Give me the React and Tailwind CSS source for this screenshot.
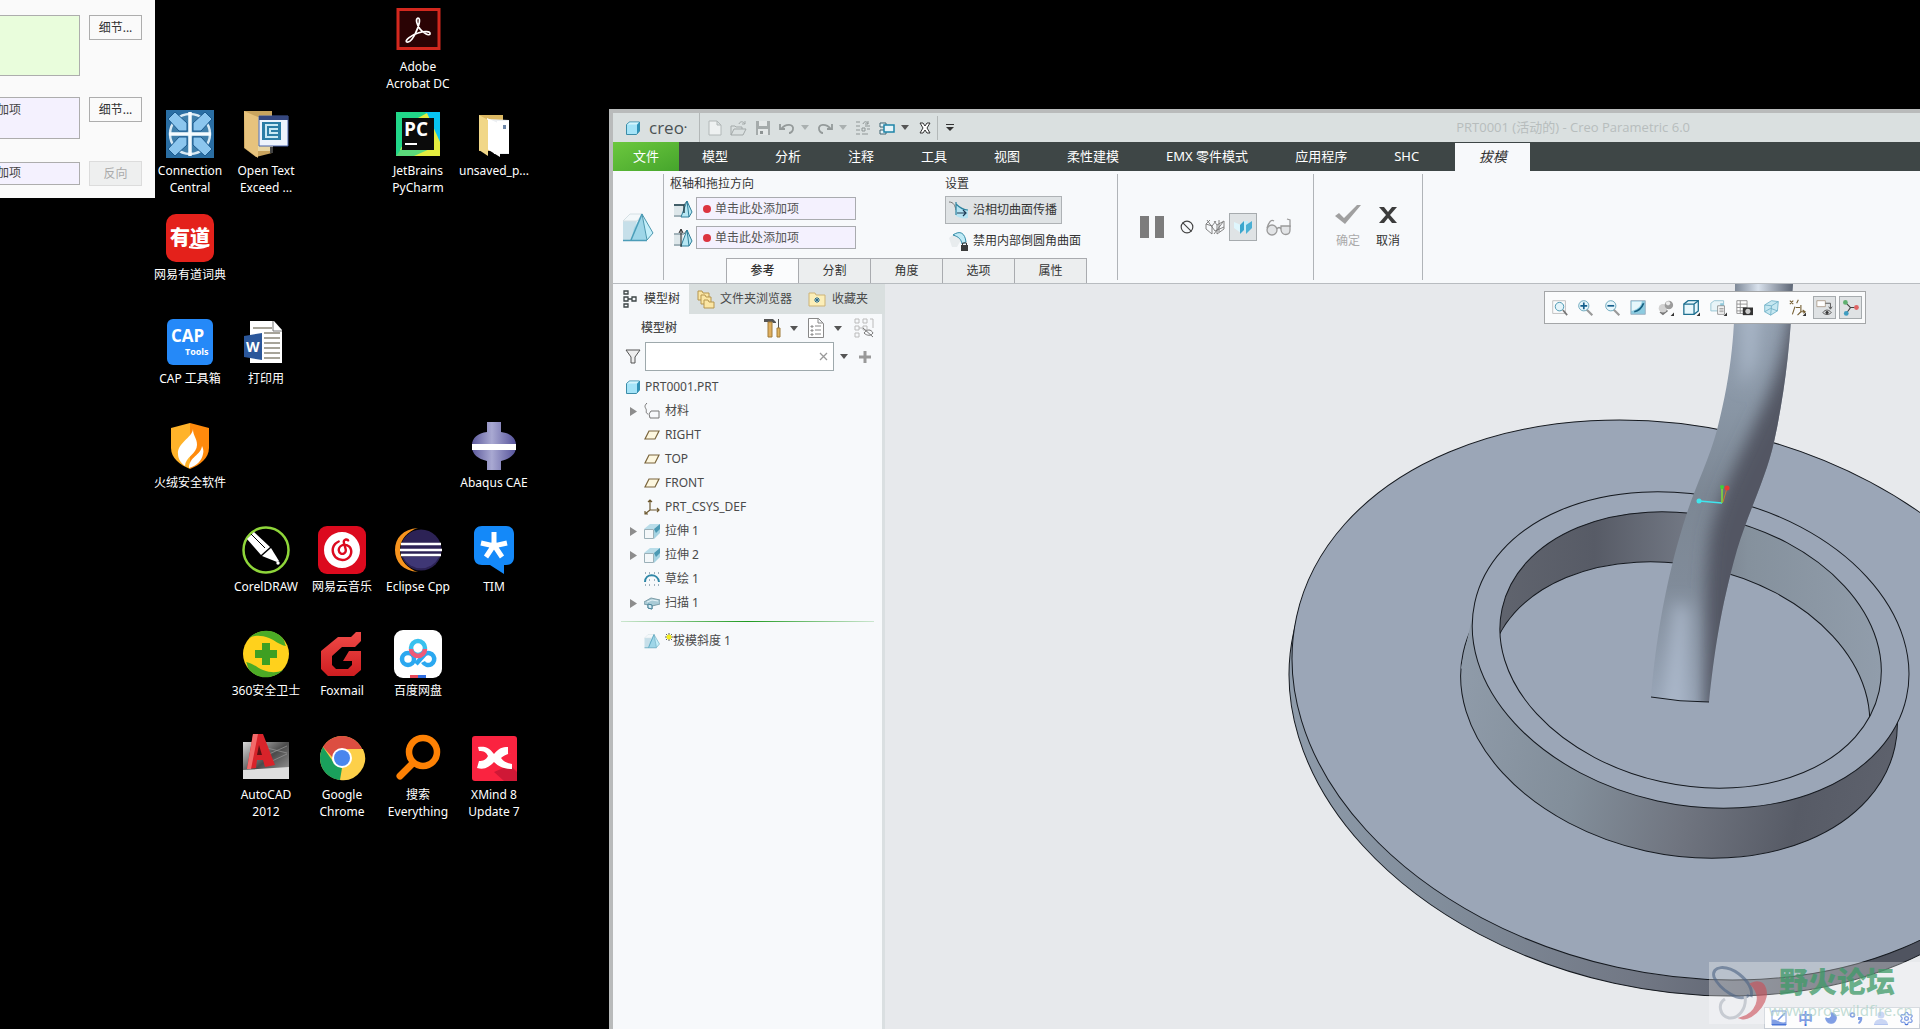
import React, { useState } from 'react';
import { SiNeteasecloudmusic } from 'react-icons/si';
import { Ban, Moon, Settings } from 'lucide-react';

/* ---------- desktop icons, all on a 48 x 48 grid ---------- */

const AcrobatIcon = () => (
  <svg viewBox="0 0 48 48" className="w-12 h-12">
    <rect x="4" y="3.500" width="41" height="39" fill="#2a0304" stroke="#d3281e" strokeWidth="3" />
    <path
      d="M13 36c-3-1 4-7 11-9 6-2 13-2 12 1-1 2-7-1-10-5-3-4-5-10-2-11 3 0 1 8-2 14-2 5-6 11-9 10z"
      fill="none" stroke="#fff" strokeWidth="1.700"
    />
  </svg>
);

const ConnectionIcon = () => (
  <svg viewBox="0 0 48 48" className="w-12 h-12">
    <rect width="48" height="48" fill="#2a6ea3" />
    <circle cx="24" cy="24" r="20" fill="#3f7fab" stroke="#d7e9f4" strokeWidth="2.500" />
    <g fill="#8cc6ee" stroke="#1b598d" strokeWidth="1">
      <path d="M2 9l7-7 12 11v8h-8z" />
      <path d="M46 9l-7-7-12 11v8h8z" />
      <path d="M2 39l7 7 12-11v-8h-8z" />
      <path d="M46 39l-7 7-12-11v-8h8z" />
    </g>
    <path d="M24 2v44M3 24h42" stroke="#f5fbff" strokeWidth="3.500" />
  </svg>
);

const ExceedIcon = () => (
  <svg viewBox="0 0 48 48" className="w-12 h-12">
    <path d="M2 1h28v42l-16 4L2 38z" fill="#c9a45e" />
    <path d="M15 7h16v34H15z" fill="#e8d6a3" />
    <path d="M17 6h29v30H17z" fill="#eef4fd" stroke="#4862a8" />
    <path d="M17 6h29v4H17z" fill="#35477f" />
    <path d="M20 12h19v18H20z" fill="#2b7da6" />
    <path d="M36 15H24v12h12M36 19h-8v4h8" fill="none" stroke="#c8e8f4" strokeWidth="2" />
    <path d="M2 1l14 6v41L3 38z" fill="#e7c37d" />
    <path d="M28 37h3v6h-3z" fill="#444" />
  </svg>
);

const PyCharmIcon = () => (
  <svg viewBox="0 0 48 48" className="w-12 h-12">
    <path d="M2 2h44v44H2z" fill="#21d789" />
    <path d="M31 2h15v30L34 12z" fill="#07c3f2" />
    <path d="M24 8l9-5 13 29v14H14l-8-6z" fill="#e3ec3f" />
    <path d="M2 46l6-8h30l-18 8z" fill="#5bd97a" />
    <path d="M8 8h32v32H8z" fill="#0b0b0b" />
    <text x="10" y="26" fontSize="19" fontWeight="700" fill="#fff" fontFamily="Open Sans, sans-serif">PC</text>
    <path d="M11 33h12v2H11z" fill="#fff" />
  </svg>
);

const FolderIcon = () => (
  <svg viewBox="0 0 48 48" className="w-12 h-12">
    <path d="M9 5h24v36H9z" fill="#dcb863" />
    <path d="M17 9l22 1v34H24z" fill="#eceff2" />
    <path d="M27 11h12v32H27z" fill="#fff" />
    <path d="M33 15h3v4h-3z" fill="#6d87a8" />
    <path d="M17 8l13 6v33l-13-8z" fill="#fff" />
    <path d="M9 5l9 5v36L9 40z" fill="#f1d788" />
  </svg>
);

const YoudaoIcon = () => (
  <svg viewBox="0 0 48 48" className="w-12 h-12">
    <rect width="48" height="48" rx="10" fill="#e4211b" />
    <text x="24" y="31" textAnchor="middle" fontSize="20" fontWeight="900" fill="#fff" fontFamily="Noto Sans CJK SC, sans-serif">有道</text>
    <path d="M23 33c8 2 15 1 20-2" fill="none" stroke="#fff" strokeWidth="2" />
  </svg>
);

const CapIcon = () => (
  <svg viewBox="0 0 48 48" className="w-12 h-12">
    <rect x="1" y="1" width="46" height="46" rx="6" fill="#2589f8" />
    <text x="5" y="24" fontSize="17" fontWeight="700" fill="#fff" fontFamily="Open Sans, sans-serif">CAP</text>
    <text x="19" y="37" fontSize="9" fontWeight="700" fill="#fff" fontFamily="Open Sans, sans-serif">Tools</text>
  </svg>
);

const WordIcon = () => (
  <svg viewBox="0 0 48 48" className="w-12 h-12">
    <path d="M8 3h24l8 9v33H8z" fill="#fff" />
    <path d="M31 3v10h9" fill="none" stroke="#777" />
    <path d="M11 10h19M22 15h16M22 20h16M22 25h16M22 30h16M22 35h16M22 40h16" stroke="#8b8778" strokeWidth="1.500" />
    <path d="M2 18l18-3v27L2 39z" fill="#2b579a" />
    <text x="4" y="34" fontSize="14" fontWeight="700" fill="#fff" fontFamily="Open Sans, sans-serif">W</text>
  </svg>
);

const HuorongIcon = () => (
  <svg viewBox="0 0 48 48" className="w-12 h-12">
    <path d="M24 1l19 5v20c0 10-9 17-19 21z" fill="#ff8a0c" />
    <path d="M24 1L5 6v20c0 10 9 17 19 21z" fill="#ffb32a" />
    <path d="M27 7c-1 9-16 14-15 25 0 5 3 9 7 12 0-9 12-12 12-21 0-7-4-9-4-16z" fill="#fff" />
    <path d="M36 24c-1 9-13 11-13 22 8-2 13-8 14-14 1-3 0-6-1-8z" fill="#fff" />
  </svg>
);

const AbaqusIcon = () => (
  <svg viewBox="0 0 48 48" className="w-12 h-12">
    <defs>
      <linearGradient id="abq" x1="0" x2="1">
        <stop offset="0" stopColor="#5d5a9c" />
        <stop offset=".45" stopColor="#a9a9d2" />
        <stop offset="1" stopColor="#55529a" />
      </linearGradient>
    </defs>
    <path d="M17 0h14v10c9 1 15 6 15 13v2c0 7-6 12-15 14v9H17v-9C8 37 2 32 2 25v-2c0-7 6-12 15-13z" fill="url(#abq)" />
    <path d="M2 22h44v6H2z" fill="#fff" />
  </svg>
);

const CorelIcon = () => (
  <svg viewBox="0 0 48 48" className="w-12 h-12">
    <circle cx="24" cy="24" r="22.500" fill="#000" stroke="#8fd63a" strokeWidth="2.500" />
    <path d="M5 13l7-7 16 15-9 8z" fill="#fff" />
    <path d="M9 8l14 14" stroke="#000" strokeWidth="1" />
    <path d="M20 30l9-8 8 13-2 1z" fill="#fff" />
    <circle cx="36" cy="37" r="1.700" fill="#fff" />
  </svg>
);

const NeteaseIcon = () => (
  <span className="flex w-12 h-12 items-center justify-center rounded-[9px] bg-[#dc0a1e]">
    <SiNeteasecloudmusic className="w-9 h-9 text-white" />
  </span>
);

const EclipseIcon = () => (
  <svg viewBox="0 0 48 48" className="w-12 h-12">
    <path d="M24 2C9 3 1 12 1 24s8 21 23 22C14 43 6 35 6 24S14 5 24 2z" fill="#f7941e" />
    <circle cx="27" cy="24" r="20.500" fill="#2c2255" />
    <path d="M9 31h36a20 20 0 0 1-36 0z" fill="#3f3775" />
    <path d="M7 18h40M6 24h42M7 29h40" stroke="#fff" strokeWidth="2.500" />
  </svg>
);

const TimIcon = () => (
  <svg viewBox="0 0 48 48" className="w-12 h-12">
    <path d="M12 0h24c5 0 8 3 8 8v23c0 5-3 8-8 8h-2v9L20 39h-8c-5 0-8-3-8-8V8c0-5 3-8 8-8z" fill="#1489f9" />
    <path d="M24 6v14M11 17l13 3 13-3M24 19l-8 12M24 19l8 12" fill="none" stroke="#fff" strokeWidth="5" />
  </svg>
);

const Safe360Icon = () => (
  <svg viewBox="0 0 48 48" className="w-12 h-12">
    <circle cx="24" cy="24" r="23" fill="#ffd11c" />
    <path d="M7 8C18-3 35-1 42 10c1 3 1 5 2 6-7-1-11-6-17-8-8-3-14-3-20 0z" fill="#4cab26" />
    <path d="M41 40C30 51 13 49 6 38c-1-3-1-5-2-6 7 1 11 6 17 8 8 3 14 3 20 0z" fill="#4cab26" />
    <path d="M20 13h8v7h7v8h-7v7h-8v-7h-7v-8h7z" fill="#3e9f22" />
  </svg>
);

const FoxmailIcon = () => (
  <svg viewBox="0 0 48 48" className="w-12 h-12">
    <defs>
      <linearGradient id="fox" x1="0" x2="0" y2="1">
        <stop offset="0" stopColor="#f04b48" />
        <stop offset="1" stopColor="#cf1d20" />
      </linearGradient>
    </defs>
    <path d="M43 2v9l-6 6H24l-10 9v9l4 4h12l4-4v-4h-9l6-10h12v19l-7 6H10l-7-7V21L20 7h13l5-5z" fill="url(#fox)" />
  </svg>
);

const BaiduDiskIcon = () => (
  <svg viewBox="0 0 48 48" className="w-12 h-12">
    <rect width="48" height="48" rx="9" fill="#fff" />
    <g fill="none" strokeWidth="4.500">
      <circle cx="14" cy="29" r="6" stroke="#2ba8f0" />
      <path d="M29 32a6 6 0 1 0 2-8l-9 10" stroke="#2ba8f0" />
      <circle cx="24" cy="18" r="7" stroke="#38c1ee" />
      <path d="M17 19a7 7 0 0 0 14 0" stroke="#ee5a78" />
    </g>
    <path d="M16 45h8v3h-8z" fill="#e94a5b" />
    <path d="M24 45h8v3h-8z" fill="#2f6de0" />
  </svg>
);

const AutoCadIcon = () => (
  <svg viewBox="0 0 48 48" className="w-12 h-12">
    <defs>
      <linearGradient id="acad" x1="0" x2="1" y2="1">
        <stop offset="0" stopColor="#d8d8d8" />
        <stop offset=".5" stopColor="#4b4b4b" />
        <stop offset="1" stopColor="#aaa" />
      </linearGradient>
    </defs>
    <path d="M1 8h46v37H1z" fill="url(#acad)" />
    <path d="M1 36l46-3v12H1z" fill="#dedede" />
    <path d="M25 14l20 5M27 20l18-8M30 27l15-7" stroke="#999" strokeWidth=".700" />
    <path d="M11 0h10l12 31-10 2-2-7h-6l-1 8-9 1z" fill="#d8232a" />
    <path d="M11 0h5L9 35H5z" fill="#f26a6a" />
    <path d="M17 11l3 10h-5z" fill="#5c1013" />
  </svg>
);

const ChromeIcon = () => (
  <svg viewBox="0 0 48 48" className="w-12 h-12">
    <circle cx="24" cy="24" r="22" fill="#fdd049" />
    <path d="M5 13a22 22 0 0 1 38 0l1 2H24l-9 9z" fill="#dc4e41" />
    <path d="M5 13l11 16 8 5-2 12A22 22 0 0 1 5 13z" fill="#1aa05c" />
    <path d="M30 32l-8 14a22 22 0 0 0 23-31H28z" fill="#fdd049" />
    <circle cx="24" cy="24" r="10" fill="#fff" />
    <circle cx="24" cy="24" r="8" fill="#4a86ee" />
  </svg>
);

const EverythingIcon = () => (
  <svg viewBox="0 0 48 48" className="w-12 h-12">
    <circle cx="29" cy="18" r="14" fill="none" stroke="#fd8104" strokeWidth="6.500" />
    <path d="M19 29L6 42" stroke="#fd8104" strokeWidth="7" strokeLinecap="round" />
  </svg>
);

const XMindIcon = () => (
  <svg viewBox="0 0 48 48" className="w-12 h-12">
    <rect x="2" y="2" width="45" height="45" rx="3" fill="#fa2340" />
    <path d="M40 31l7 7v9H34l-10-9z" fill="#cf1836" />
    <path d="M8 13c6-1 11 0 16 7 5-6 8-7 14-7v7l4-1c-5 1-8 2-11 5 3 4 6 5 11 6v5c-8 0-13-2-18-7-5 5-9 8-17 6l2-7c4 0 7-1 9-5-2-4-4-5-9-5z" fill="#fff" />
  </svg>
);

// row / column slots of the desktop grid
const shortcuts = [
  { Icon: AcrobatIcon, label: 'Adobe Acrobat DC', place: 'col-start-4 row-start-1' },
  { Icon: ConnectionIcon, label: 'Connection Central', place: 'col-start-1 row-start-2' },
  { Icon: ExceedIcon, label: 'Open Text Exceed ...', place: 'col-start-2 row-start-2' },
  { Icon: PyCharmIcon, label: 'JetBrains PyCharm', place: 'col-start-4 row-start-2' },
  { Icon: FolderIcon, label: 'unsaved_p...', place: 'col-start-5 row-start-2' },
  { Icon: YoudaoIcon, label: '网易有道词典', place: 'col-start-1 row-start-3' },
  { Icon: CapIcon, label: 'CAP 工具箱', place: 'col-start-1 row-start-4' },
  { Icon: WordIcon, label: '打印用', place: 'col-start-2 row-start-4' },
  { Icon: HuorongIcon, label: '火绒安全软件', place: 'col-start-1 row-start-5' },
  { Icon: AbaqusIcon, label: 'Abaqus CAE', place: 'col-start-5 row-start-5' },
  { Icon: CorelIcon, label: 'CorelDRAW', place: 'col-start-2 row-start-6' },
  { Icon: NeteaseIcon, label: '网易云音乐', place: 'col-start-3 row-start-6' },
  { Icon: EclipseIcon, label: 'Eclipse Cpp', place: 'col-start-4 row-start-6' },
  { Icon: TimIcon, label: 'TIM', place: 'col-start-5 row-start-6' },
  { Icon: Safe360Icon, label: '360安全卫士', place: 'col-start-2 row-start-7' },
  { Icon: FoxmailIcon, label: 'Foxmail', place: 'col-start-3 row-start-7' },
  { Icon: BaiduDiskIcon, label: '百度网盘', place: 'col-start-4 row-start-7' },
  { Icon: AutoCadIcon, label: 'AutoCAD 2012', place: 'col-start-2 row-start-8' },
  { Icon: ChromeIcon, label: 'Google Chrome', place: 'col-start-3 row-start-8' },
  { Icon: EverythingIcon, label: '搜索 Everything', place: 'col-start-4 row-start-8' },
  { Icon: XMindIcon, label: 'XMind 8 Update 7', place: 'col-start-5 row-start-8' },
];

function Desktop() {
  return (
    <div className="absolute left-[152px] top-[6px] grid grid-cols-[repeat(5,76px)] grid-rows-[repeat(8,104px)]">
      {shortcuts.map(({ Icon, label, place }) => (
        <button key={label} className={`flex flex-col items-center gap-1 text-xs leading-[17px] text-white ${place}`}>
          <Icon />
          <span className="text-center">{label}</span>
        </button>
      ))}
    </div>
  );
}

/* ---------- dialog cut off by the left edge ---------- */

function ReferencePanel() {
  const detail = 'h-[25px] w-[53px] border border-[#adadad] bg-[#fafafa] text-xs text-[#333]';
  return (
    <section className="absolute -left-1 top-0 flex h-[198px] w-[159px] flex-col bg-[#fafafa] pt-[15px] text-xs text-[#444]">
      <div className="flex h-[82px] items-start gap-[9px]">
        <div className="h-[61px] w-[84px] border border-[#adadad] bg-[#e9fddc]" />
        <button className={detail}>细节...</button>
      </div>
      <div className="flex h-[64px] items-start gap-[9px]">
        <div className="h-[42px] w-[84px] border border-[#adadad] bg-[#f4f1fe] pt-1 leading-4">加项</div>
        <button className={detail}>细节...</button>
      </div>
      <div className="flex items-center gap-[9px]">
        <div className="h-[23px] w-[84px] border border-[#adadad] bg-[#f4f1fe] leading-5">加项</div>
        <button disabled className="h-[25px] w-[53px] border border-[#dcdcdc] bg-[#eeefef] text-xs text-[#aaa]">反向</button>
      </div>
    </section>
  );
}

/* ---------- application icons ---------- */

const Caret = ({ className = 'text-[#555]' }) => (
  <svg viewBox="0 0 8 5" className={`h-[5px] w-2 shrink-0 ${className}`}>
    <path d="M0 0h8L4 5z" fill="currentColor" />
  </svg>
);

const CubeIcon = () => (
  <svg viewBox="0 0 16 16" className="h-4 w-4 shrink-0">
    <path d="M1.500 4.500l3-2.500h10v9l-3 3.500h-10z" fill="#a5e4f8" stroke="#3b8ca8" />
    <path d="M12 4.500l2.500-2.500v9l-2.500 3z" fill="#2f93b8" />
    <path d="M2 4.500l3-2h9l-2.500 2z" fill="#d5f5fd" />
  </svg>
);

const DraftIcon = ({ className = 'h-4 w-4' }) => (
  <svg viewBox="0 0 32 32" className={`shrink-0 ${className}`}>
    <path d="M1 10h14L9 29H1z" fill="#c6dfe9" />
    <path d="M1 10l7-7h13l-6 7z" fill="#f3f8fa" stroke="#d5e0e4" />
    <path d="M20 3l-8 14-3 12h16z" fill="#9ed6e8" />
    <path d="M20 3l11 19-6 7z" fill="#c4effa" stroke="#4c97ae" />
    <path d="M1 29.500h24M20 3L9 29" stroke="#4c9db8" strokeWidth="1.500" />
  </svg>
);

const HingeIcon = ({ arrow }) => (
  <svg viewBox="0 0 20 20" className="h-5 w-5 shrink-0">
    <path d="M1 6h10l3-4M1 17h9" fill="none" stroke="#4a6b76" />
    <path d="M1 7h9v9H1z" fill="#dde7ea" />
    <path d="M14 2l5 11-3 5H8z" fill="#b6e7f3" stroke="#2f7f9a" />
    <path d="M14 2l2 16" stroke="#2f7f9a" />
    {arrow ? <path d="M8 19V2M6 5l2-4 2 4" fill="none" stroke="#222" /> : <path d="M1 6h10v8" fill="none" stroke="#23434d" strokeWidth="1.500" />}
  </svg>
);

const TangentIcon = () => (
  <svg viewBox="0 0 20 20" className="h-5 w-5 shrink-0">
    <path d="M0 2c5 0 6 4 7 8" fill="none" stroke="#777" />
    <path d="M7 3v13c4 2 8 3 12 2v-8c-6 0-8-2-12-7z" fill="#b5e3f2" />
    <path d="M7 2v13M7 4c4 4 7 6 12 6" fill="none" stroke="#2d83a0" strokeWidth="1.200" />
    <path d="M8 13h8M14 10l3 3-3 3" fill="none" stroke="#1c3a55" strokeWidth="1.200" />
  </svg>
);

const RoundLockIcon = () => (
  <svg viewBox="0 0 20 20" className="h-5 w-5 shrink-0">
    <path d="M0 7l6-5h4l2 7-4 7H3z" fill="#e8ecee" />
    <path d="M4 4c7-5 12-2 13 7l-4 2c-1-5-3-7-9-9z" fill="#bfeaf6" stroke="#348ba7" />
    <path d="M12 14h7v6h-7z" fill="#3b3b3b" />
    <path d="M13.500 14v-2h4v2" fill="none" stroke="#3b3b3b" />
  </svg>
);

const TreeTabIcon = () => (
  <svg viewBox="0 0 14 18" className="h-[18px] w-[14px] shrink-0" fill="none" stroke="#3d4446" strokeWidth="1.300">
    <path d="M1 1h4v3H1zM1 7h4v4H1zM1 14h4v3H1zM9 7h4v4H9zM5 9h4" />
  </svg>
);

const FoldersIcon = () => (
  <svg viewBox="0 0 18 20" className="h-5 w-[18px] shrink-0" fill="#fbe6a4" stroke="#b5954f">
    <path d="M1 2h4l1 2h6v7H1z" />
    <path d="M4 6h4l1 2h5v7H4z" />
    <path d="M7 11h4l1 2h5v6H7z" />
  </svg>
);

const FavoritesIcon = () => (
  <svg viewBox="0 0 18 16" className="h-4 w-[18px] shrink-0">
    <path d="M1 2h6l1 2h9v11H1z" fill="#fbeeb8" stroke="#cdb377" />
    <path d="M9 6v6M6 9h6M7 7l4 4M11 7l-4 4" stroke="#236a94" />
  </svg>
);

const PlaneIcon = () => (
  <svg viewBox="0 0 16 16" className="h-4 w-4 shrink-0">
    <path d="M5 4h10l-4 8H1z" fill="#fdf7df" stroke="#7a653c" strokeWidth="1.200" />
  </svg>
);

const CsysIcon = () => (
  <svg viewBox="0 0 16 16" className="h-4 w-4 shrink-0">
    <path d="M6 1v10h9M6 11l-5 4M4 3l2-2 2 2M13 9l2 2-2 2M1 12v3h3" fill="none" stroke="#6d5930" strokeWidth="1.200" />
  </svg>
);

const ExtrudeIcon = () => (
  <svg viewBox="0 0 16 16" className="h-4 w-4 shrink-0">
    <path d="M0 6l6-5h10L10 6z" fill="#b9dde9" />
    <path d="M10 6l6-5v9l-6 6z" fill="#a5d3e2" />
    <path d="M10 6l6-5v5l-4 4z" fill="#4b99b3" />
    <path d="M.500 6.500h9v9h-9z" fill="#f3f7f9" stroke="#9bb0b8" />
  </svg>
);

const SketchIcon = () => (
  <svg viewBox="0 0 16 16" className="h-4 w-4 shrink-0">
    <path d="M1 11c0-9 13-9 14 0" fill="none" stroke="#2f87a7" strokeWidth="2" />
    <path d="M1 2h1M5 2h1M10 2h1M14 2h1M5 9h1M10 9h1M1 14h1M5 14h1M10 14h1M14 14h1" stroke="#4a6a80" />
  </svg>
);

const SweepIcon = () => (
  <svg viewBox="0 0 16 16" className="h-4 w-4 shrink-0">
    <path d="M0 7l7-4 9 2v4l-8 2v3l-4-1v-3L0 9z" fill="#a9cbd6" stroke="#7c9ca7" />
    <path d="M4 9l4 1v4l-4-1z" fill="#dceef4" stroke="#3f7f96" />
    <path d="M3 7l5-2 6 1" fill="none" stroke="#e7f3f7" />
  </svg>
);

const MaterialIcon = () => (
  <svg viewBox="0 0 16 16" className="h-4 w-4 shrink-0" fill="none" stroke="#777">
    <path d="M3 0C0 3 1 4 2 6S1 10 4 11M5 11l2-3h8v7H6z" />
  </svg>
);

/* ---------- title bar ---------- */

function QuickAccess() {
  return (
    <div className="flex h-full items-center text-[#a9afaf]">
      <button aria-label="新建" className="ml-2">
        <svg viewBox="0 0 14 16" className="h-4 w-[14px]" fill="#eef1f1" stroke="#b2b8b8"><path d="M1 1h8l4 4v10H1zM9 1v4h4" /></svg>
      </button>
      <button aria-label="打开" className="ml-2">
        <svg viewBox="0 0 17 16" className="h-4 w-[17px]" fill="none" stroke="#a3a9a9"><path d="M1 15V6h4l1 1h6v2M1 15h12l3-6H4zM9 4c1-3 4-3 6 0M15 1v3h-3" /></svg>
      </button>
      <button aria-label="保存" className="ml-2">
        <svg viewBox="0 0 16 16" className="h-4 w-4"><path d="M1 1h14v14H1z" fill="#a5abab" /><path d="M4 1h8v5H4zM3 9h10v6H3z" fill="#e4e8e8" /><path d="M5 11h3v3H5z" fill="#8d9393" /></svg>
      </button>
      <button aria-label="撤消" className="ml-2">
        <svg viewBox="0 0 16 12" className="h-3 w-4" fill="none" stroke="#949a9a" strokeWidth="1.800"><path d="M1 2v5h5M2 7c5-6 13-5 12 0 0 2-2 4-4 4" /></svg>
      </button>
      <button aria-label="撤消列表" className="ml-[6px]"><Caret className="text-[#aab0b0]" /></button>
      <button aria-label="重做" className="ml-2">
        <svg viewBox="0 0 16 12" className="h-3 w-4" fill="none" stroke="#949a9a" strokeWidth="1.800"><path d="M15 2v5h-5M14 7C9 1 1 2 2 7c0 2 2 4 4 4" /></svg>
      </button>
      <button aria-label="重做列表" className="ml-[6px]"><Caret className="text-[#aab0b0]" /></button>
      <button aria-label="重新生成" className="ml-2">
        <svg viewBox="0 0 16 16" className="h-4 w-4" fill="none" stroke="#8f9696"><path d="M1 2h4M1 6h4M1 10h4M1 14h4M7 8h3v3H7zM7 14h6M12 9h3M8 4c1-3 4-3 5 0M13 1v3h-3M10 6h5" /></svg>
      </button>
      <button aria-label="窗口" className="ml-2">
        <svg viewBox="0 0 16 14" className="h-[14px] w-4" fill="#e6f4f9" stroke="#3d6370"><path d="M1 2h6v4H1zM1 9h6v4H1z" /><path d="M5 4h10v7H5z" stroke="#1e84a8" strokeWidth="1.500" /></svg>
      </button>
      <button aria-label="窗口列表" className="ml-[6px]"><Caret /></button>
      <button aria-label="关闭" className="ml-[10px]">
        <svg viewBox="0 0 12 12" className="h-3 w-3"><path d="M1 1h3l2 3 2-3h3L8 6l3 5H8L6 8l-2 3H1l3-5z" fill="#fff" stroke="#333" /></svg>
      </button>
      <div className="ml-[6px] h-6 w-px bg-[#b3b8b8]" />
      <button aria-label="自定义" className="ml-2">
        <svg viewBox="0 0 8 7" className="h-[7px] w-2"><path d="M0 0h8v1H0zM0 3h8L4 7z" fill="#333" /></svg>
      </button>
    </div>
  );
}

function TitleBar() {
  return (
    <header className="flex h-[29px] items-center bg-[#dae0e0]">
      <div className="flex h-full w-[87px] items-center gap-2 border-r border-[#b3b8b8] pl-3 text-[17px] text-[#4b5254]">
        <CubeIcon />
        <span className="font-['Open_Sans'] leading-5">creo<sup className="text-[8px]">•</sup></span>
      </div>
      <QuickAccess />
      <h1 className="ml-auto mr-[230px] font-['Open_Sans','Noto_Sans_CJK_SC',sans-serif] text-[13px] text-[#b7bdbd]">PRT0001 (活动的) - Creo Parametric 6.0</h1>
    </header>
  );
}

const menus = ['模型', '分析', '注释', '工具', '视图', '柔性建模', 'EMX 零件模式', '应用程序', 'SHC'];

function MenuBar() {
  return (
    <nav className="flex h-[29px] bg-[#3e4646] text-[13px] text-white">
      <button className="w-[66px] shrink-0 bg-gradient-to-br from-[#6cc83e] to-[#45a52c]">文件</button>
      <div className="ml-[23px] flex gap-[47px]">
        {menus.map((m) => (
          <button key={m} className="whitespace-nowrap">{m}</button>
        ))}
      </div>
      <button className="ml-9 mt-px w-[75px] shrink-0 bg-[#f7f9fb] text-sm italic text-[#333]">拔模</button>
    </nav>
  );
}

/* ---------- ribbon ---------- */

function Collector({ label, arrow }) {
  return (
    <div className="flex items-center gap-[3px]">
      <HingeIcon arrow={arrow} />
      <label className="flex h-[23px] w-[160px] items-center gap-1 border border-[#a9abaf] bg-[#f4f1fe] pl-[6px]">
        <span className="h-2 w-2 shrink-0 rounded-full bg-[#dc3440]" />
        <input aria-label={label} defaultValue="单击此处添加项" className="w-full bg-transparent text-xs text-[#555] outline-none" />
      </label>
    </div>
  );
}

function Ribbon() {
  const [tab, setTab] = useState('参考');
  const tabs = ['参考', '分割', '角度', '选项', '属性'];
  return (
    <div className="flex h-[113px] border-b border-[#b8bcc0] bg-[#f7f9fb] text-xs text-[#333]">
      <div className="my-[3px] flex w-[51px] shrink-0 items-center justify-center border-r border-[#b0b4b8]">
        <DraftIcon className="h-8 w-8" />
      </div>
      <div className="flex w-[453px] shrink-0 flex-col justify-between">
        <div className="flex pl-[6px] pt-1">
          <div className="flex w-[275px] flex-col">
            <h2 className="text-xs leading-[18px]">枢轴和拖拉方向</h2>
            <div className="mt-1 flex flex-col gap-[6px] pl-[3px]">
              <Collector label="拔模枢轴" />
              <Collector label="拖拉方向" arrow />
            </div>
          </div>
          <div className="flex flex-col">
            <h2 className="text-xs leading-[18px]">设置</h2>
            <button className="mt-[3px] flex h-7 w-[117px] items-center gap-1 border border-[#aeb2b5] bg-[#dfe3e5] pl-[3px] whitespace-nowrap">
              <TangentIcon />沿相切曲面传播
            </button>
            <button className="mt-[5px] flex h-6 items-center gap-1 pl-1 whitespace-nowrap">
              <RoundLockIcon />禁用内部倒圆角曲面
            </button>
          </div>
        </div>
        <div className="-mt-1 ml-[62px] flex" role="tablist">
          {tabs.map((t) => (
            <button
              key={t}
              role="tab"
              aria-selected={t === tab}
              onClick={() => setTab(t)}
              className={`-mr-px h-[25px] w-[73px] border border-b-0 border-[#a9abaf] ${t === tab ? 'bg-[#fbfcfd] font-medium' : 'bg-[#eceeef]'}`}
            >
              {t}
            </button>
          ))}
        </div>
      </div>
      <div className="my-[3px] flex w-[197px] shrink-0 items-center border-x border-[#b0b4b8] pl-[22px]">
        <button aria-label="暂停" className="flex gap-[6px]">
          <span className="h-[22px] w-[9px] bg-[#7c7c7c]" />
          <span className="h-[22px] w-[9px] bg-[#7c7c7c]" />
        </button>
        <button aria-label="无预览" className="ml-4"><Ban className="h-[14px] w-[14px] text-[#444]" /></button>
        <button aria-label="分离预览" className="ml-[11px]">
          <svg viewBox="0 0 20 16" className="h-4 w-5" fill="none" stroke="#777" strokeWidth=".900"><path d="M1 5l6 2v8l-6-5zM7 7l4-5M1 5l4-4M12 6l7-4v8l-7 5zM12 6L9 2M2 1l8 11M18 3l-9 12M14 1v12M10 12l9-4" /></svg>
        </button>
        <button aria-label="连接预览" className="ml-1 flex h-7 w-7 items-center justify-center border border-[#a6abae] bg-[#dfe3e5]">
          <svg viewBox="0 0 20 16" className="h-4 w-5"><path d="M1 3l7 3v8l-7-5z" fill="#dff6fd" /><path d="M7 6l4-4v9l-4 4z" fill="#3aa6cd" /><path d="M11 2h4l-1 12-3-3z" fill="#c6eefa" /><path d="M13 6l6-4v7l-6 6z" fill="#4bb0d4" /></svg>
        </button>
        <button aria-label="校验" className="ml-2">
          <svg viewBox="0 0 28 18" className="h-[18px] w-7" fill="#e2e4e6" stroke="#9a9a9a" strokeWidth="1.300"><circle cx="7" cy="12" r="5" /><path d="M16 8h9v4c0 6-8 6-9 0zM12 11c1-2 3-2 4 0" /><path d="M2 10C4 4 6 1 9 3M25 9V2l-3-1" fill="none" /></svg>
        </button>
      </div>
      <div className="my-[3px] flex w-[109px] shrink-0 items-center gap-[14px] border-r border-[#b0b4b8] pl-5">
        <button disabled className="flex flex-col items-center gap-2 text-[#aaa]">
          <svg viewBox="0 0 28 20" className="h-5 w-7"><path d="M1 11l4-3 5 5L23 0h4L11 19z" fill="#a0a0a0" /></svg>
          确定
        </button>
        <button className="flex flex-col items-center gap-2">
          <svg viewBox="0 0 20 20" className="h-5 w-5"><path d="M1 2h5l4 5 4-5h5l-7 8 7 8h-5l-4-5-4 5H1l7-8z" fill="#3c3c3c" /></svg>
          取消
        </button>
      </div>
    </div>
  );
}

/* ---------- model tree ---------- */

const treeItems = [
  { Icon: MaterialIcon, name: '材料', open: true },
  { Icon: PlaneIcon, name: 'RIGHT' },
  { Icon: PlaneIcon, name: 'TOP' },
  { Icon: PlaneIcon, name: 'FRONT' },
  { Icon: CsysIcon, name: 'PRT_CSYS_DEF' },
  { Icon: ExtrudeIcon, name: '拉伸 1', open: true },
  { Icon: ExtrudeIcon, name: '拉伸 2', open: true },
  { Icon: SketchIcon, name: '草绘 1' },
  { Icon: SweepIcon, name: '扫描 1', open: true },
];

function ModelTree() {
  const [query, setQuery] = useState('');
  return (
    <aside className="flex w-[272px] shrink-0 flex-col border-r-[3px] border-[#dadfe1] bg-[#f7f9fb] text-xs text-[#4a4a4a]">
      <div className="-mr-[3px] flex h-[30px] bg-[#d9dfdf]" role="tablist">
        <button role="tab" aria-selected="true" className="flex w-[76px] items-center gap-[7px] bg-[#f7f9fb] pl-[10px] text-[#333]"><TreeTabIcon />模型树</button>
        <button role="tab" aria-selected="false" className="flex w-[111px] items-center gap-[5px] pl-2"><FoldersIcon />文件夹浏览器</button>
        <button role="tab" aria-selected="false" className="flex items-center gap-[6px] pl-2"><FavoritesIcon />收藏夹</button>
      </div>
      <div className="flex h-7 items-center pl-7">
        <h2 className="text-xs font-medium">模型树</h2>
        <button aria-label="设置" className="ml-[87px]">
          <svg viewBox="0 0 18 20" className="h-5 w-[18px]"><path d="M0 1h9l3 3v1H9L8 4H0z" fill="#555" /><path d="M4 4h4v15H4z" fill="#e0b060" stroke="#a07a38" /><path d="M14 1h1v9h-1z" fill="#555" /><path d="M13 10h3v9h-3z" fill="#e0b45f" stroke="#a07a38" /></svg>
        </button>
        <button aria-label="设置菜单" className="ml-2"><Caret /></button>
        <button aria-label="显示" className="ml-[10px]">
          <svg viewBox="0 0 16 20" className="h-5 w-4" fill="#fff" stroke="#888"><path d="M.500.500h10l5 5v14H.500zM3 8h2v1H3zM3 12h2v1H3zM3 16h2v1H3zM7 8h6M7 12h6M7 16h6M10 0v5h5" /></svg>
        </button>
        <button aria-label="显示菜单" className="ml-[10px]"><Caret /></button>
        <button aria-label="隐藏树" className="ml-3">
          <svg viewBox="0 0 20 20" className="h-5 w-5" fill="none" stroke="#bbb"><path d="M1 1h4v4H1zM1 8h4v4H1zM1 15h4v4H1zM9 1h4v4H9zM9 8h4v4H9zM5 10h4M16 1h3v9" /><path d="M10 15c3-4 7-4 9 0-2 3-6 3-9 0zM9 10l10 9" stroke="#777" /></svg>
        </button>
      </div>
      <div className="flex h-[29px] items-center pl-3">
        <svg viewBox="0 0 16 15" className="h-[15px] w-4 shrink-0"><path d="M1 1h14L10 8v6H6V8z" fill="#eee" stroke="#555" /></svg>
        <label className="ml-1 flex h-[29px] w-[189px] items-center border border-[#9ea9ac] bg-white pr-1">
          <input aria-label="搜索树" value={query} onChange={(e) => setQuery(e.target.value)} className="w-full px-2 outline-none" />
          <button aria-label="清除" onClick={() => setQuery('')}>
            <svg viewBox="0 0 9 9" className="mx-[1px] h-[9px] w-[9px]"><path d="M1 1l7 7M8 1L1 8" stroke="#999" strokeWidth="1.300" /></svg>
          </button>
        </label>
        <button aria-label="搜索选项" className="ml-[6px]"><Caret /></button>
        <button aria-label="添加" className="ml-[11px]">
          <svg viewBox="0 0 12 12" className="h-3 w-3"><path d="M6 0v12M0 6h12" stroke="#999" strokeWidth="3" /></svg>
        </button>
      </div>
      <ul className="mt-1 pl-3">
        <li className="flex h-6 items-center gap-1"><CubeIcon />PRT0001.PRT</li>
        {treeItems.map(({ Icon, name, open }) => (
          <li key={name} className="flex h-6 items-center pl-[5px]">
            <span className="w-[14px] shrink-0">
              {open && (
                <button aria-label={`展开 ${name}`} className="block">
                  <svg viewBox="0 0 7 9" className="h-[9px] w-[7px]"><path d="M0 0l7 4.500L0 9z" fill="#8d8d8d" /></svg>
                </button>
              )}
            </span>
            <Icon />
            <span className="ml-[5px]">{name}</span>
          </li>
        ))}
      </ul>
      <div className="mx-2 mt-[6px] h-px bg-gradient-to-r from-[#1f9a1f]/20 via-[#1f9a1f] to-[#1f9a1f]/20" />
      <div className="mt-[7px] flex h-6 items-center gap-[5px] pl-[31px]">
        <DraftIcon />
        <span className="flex">
          <svg viewBox="0 0 8 8" className="h-2 w-2"><path d="M4 0v8M0 4h8M1 1l6 6M7 1L1 7" stroke="#333" strokeWidth=".800" /><circle cx="4" cy="4" r="2.500" fill="#f4ee20" /></svg>
          拔模斜度 1
        </span>
      </div>
    </aside>
  );
}

/* ---------- graphics area ---------- */

const TUBE = 'M1735 280C1735 325 1733 368 1717 430C1709 460 1695 487 1686 516C1670 565 1657 625 1651 697Q1680 703 1709 702C1714 655 1720 610 1737 550C1749 510 1766 478 1774 442C1784 396 1791 345 1793 280Z';

function Model() {
  return (
    <svg viewBox="1280 284 640 745" className="absolute right-0 top-0 h-[745px] w-[640px]">
      <defs>
        <linearGradient id="rim" gradientUnits="userSpaceOnUse" x1="1288" x2="1920" y1="0" y2="0">
          <stop offset="0" stopColor="#8f9cab" />
          <stop offset=".3" stopColor="#828e9c" />
          <stop offset=".65" stopColor="#717784" />
          <stop offset="1" stopColor="#505460" />
        </linearGradient>
        <linearGradient id="outer" gradientUnits="userSpaceOnUse" x1="1461" x2="1909" y1="0" y2="0">
          <stop offset="0" stopColor="#8f9ba9" />
          <stop offset=".3" stopColor="#828e9a" />
          <stop offset=".55" stopColor="#707580" />
          <stop offset=".8" stopColor="#575b66" />
          <stop offset="1" stopColor="#5e626d" />
        </linearGradient>
        <linearGradient id="inner" gradientUnits="userSpaceOnUse" x1="1499" x2="1882" y1="0" y2="0">
          <stop offset="0" stopColor="#60646e" />
          <stop offset=".25" stopColor="#575b66" />
          <stop offset=".5" stopColor="#737985" />
          <stop offset=".65" stopColor="#85919d" />
          <stop offset="1" stopColor="#919dab" />
        </linearGradient>
        <linearGradient id="cap" x1="0" x2="1">
          <stop offset="0" stopColor="#7e8998" />
          <stop offset=".4" stopColor="#d8e1ec" />
          <stop offset="1" stopColor="#5d6675" />
        </linearGradient>
        <linearGradient id="tubeBase" x1="0" x2="0" y2="1">
          <stop offset="0" stopColor="#98a5b6" />
          <stop offset=".3" stopColor="#8996a5" />
          <stop offset=".5" stopColor="#7c8794" />
          <stop offset=".7" stopColor="#808b99" />
          <stop offset="1" stopColor="#99a6b8" />
        </linearGradient>
        <filter id="soft" filterUnits="userSpaceOnUse" x="1600" y="240" width="260" height="520">
          <feGaussianBlur stdDeviation="8" />
        </filter>
        <clipPath id="bore"><ellipse cx="1690.600" cy="650" rx="193" ry="135" transform="rotate(12.400 1690.600 650)" /></clipPath>
        <clipPath id="tube"><path d={TUBE} /></clipPath>
      </defs>

      {/* plate */}
      <g stroke="#15191f" strokeWidth="1">
        <ellipse cx="1673" cy="716" rx="388.500" ry="273.700" transform="rotate(12.400 1673 716)" fill="url(#rim)" />
        <ellipse cx="1676" cy="700" rx="388.500" ry="273.700" transform="rotate(12.400 1676 700)" fill="#9ba6b7" />
        {/* ring */}
        <ellipse cx="1679" cy="700" rx="221" ry="154.500" transform="rotate(12.400 1679 700)" fill="url(#outer)" />
      </g>
      <path d="M1472 618L1461 668 1480 690 1490 640zM1908 660L1897 715 1880 710 1895 670z" fill="url(#outer)" />
      <ellipse cx="1690.600" cy="650" rx="221" ry="154.500" transform="rotate(12.400 1690.600 650)" fill="#9ba6b7" stroke="#15191f" />
      <g clipPath="url(#bore)">
        <path d="M1480 490h420v320h-420z" fill="url(#inner)" />
        <ellipse cx="1679" cy="700" rx="193" ry="135" transform="rotate(12.400 1679 700)" fill="#9ba6b7" stroke="#15191f" />
      </g>
      <ellipse cx="1690.600" cy="650" rx="193" ry="135" transform="rotate(12.400 1690.600 650)" fill="none" stroke="#15191f" />

      {/* swept tube */}
      <g clipPath="url(#tube)">
        <path d="M1640 280h160v430h-160z" fill="url(#tubeBase)" />
        <g filter="url(#soft)">
          <path d="M1800 250L1789 320C1782 370 1766 400 1752 430C1737 462 1722 490 1711 530C1706 560 1705 600 1706 630C1705 660 1704 690 1704 740H1760L1830 500V250z" fill="#535763" />
          <path d="M1742 250h22l-8 110-14 30z" fill="#aab8c9" />
          <path d="M1676 600l12 10-4 120h-24z" fill="#abb8ca" />
        </g>
      </g>
      <path d="M1735 284h58l-1 8h-57z" fill="url(#cap)" />
      <path d="M1651 697Q1680 702 1709 702" fill="none" stroke="#15191f" />

      {/* csys marker */}
      <path d="M1699 501l23 2" stroke="#3fe6ee" strokeWidth="1.500" />
      <path d="M1722 503v-16" stroke="#7fe03a" strokeWidth="1.500" />
      <path d="M1723 502l4-14" stroke="#c9772c" />
      <circle cx="1699" cy="501" r="2.500" fill="#3fe6ee" />
      <circle cx="1722" cy="487" r="2" fill="#3fcf3a" />
      <circle cx="1727" cy="488" r="2.500" fill="#e83a32" />
    </svg>
  );
}

const viewTools = [
  { name: '重新调整', art: <g fill="none" stroke="#777"><path d="M2 2h15v15H2z" stroke="#bbb" /><circle cx="10" cy="9" r="5" stroke="#348aa8" fill="#e4f4fa" /><path d="M14 13l5 6" strokeWidth="2" /></g> },
  { name: '放大', art: <g fill="none"><path d="M11 12l7 7" stroke="#999" strokeWidth="2.500" /><circle cx="8" cy="8" r="6" stroke="#5a9db5" fill="#e8f7fc" /><path d="M8 4v8M4 8h8" stroke="#15608d" strokeWidth="2" /></g> },
  { name: '缩小', art: <g fill="none"><path d="M11 12l7 7" stroke="#999" strokeWidth="2.500" /><circle cx="8" cy="8" r="6" stroke="#5a9db5" fill="#e8f7fc" /><path d="M4 8h8" stroke="#15608d" strokeWidth="2" /></g> },
  { name: '重画', art: <g><path d="M1 2h17v16H1z" fill="#8ccbe0" stroke="#9ab" /><path d="M2 3h12c-1 6-5 9-12 11z" fill="#e6f6fb" /><path d="M5 15c6-1 9-5 11-10" fill="none" stroke="#155f80" strokeWidth="2" /></g> },
  { name: '渲染', art: <g><path d="M3 16l6-6 4 4-6 5z" fill="#777" /><circle cx="7" cy="11" r="5" fill="#d2d2d2" /><circle cx="14" cy="7" r="5" fill="#9c9c9c" /><circle cx="13" cy="5" r="2.500" fill="#ececec" /><path d="M20 16v4h-4z" fill="#333" /></g> },
  { name: '显示样式', art: <g><path d="M1 6l5-4h12v12l-5 4H1z" fill="#e7f7fc" stroke="#1d6f8f" strokeWidth="1.500" /><path d="M1 6h12v12M13 6l5-4" fill="none" stroke="#1d6f8f" strokeWidth="1.500" /><path d="M20 16v4h-4z" fill="#333" /></g> },
  { name: '已保存方向', art: <g><path d="M1 5l4-3h11v12H1z" fill="#e8f4f8" stroke="#8fc0d0" /><path d="M12 5h4v12h-4z" fill="#8fc9dc" /><path d="M9 8h8v10H9z" fill="#fff" stroke="#888" /><path d="M11 11h5M11 13h5M11 15h5" stroke="#888" /><path d="M20 16v4h-4z" fill="#333" /></g> },
  { name: '视图管理器', art: <g><path d="M1 2h12v15H1zM1 6h12M1 10h12M1 14h12M5 2v15" fill="#fff" stroke="#888" /><path d="M8 10h12v9H8z" fill="#333" /><circle cx="14" cy="14.500" r="3" fill="#ccc" /></g> },
  { name: '透视图', art: <g stroke="#6fb0c6"><path d="M2 7l8-5 8 1-1 11-8 5-7-4z" fill="#c5e7f1" /><path d="M2 7l8 1 8-5M10 8l-1 11M2 15l7-4 8 3" fill="none" /></g> },
  { name: '基准显示', art: <g fill="none" stroke="#765f33" strokeWidth="1.300"><path d="M1 2l4 4M5 2L1 6M11 1L9 5M7 9l-3 9M8 10h5M14 7v8h5M14 15l-4 4M16 13l3 2-2 2" /><path d="M20 16v4h-4z" fill="#333" stroke="none" /></g> },
  { name: '注释显示', on: true, art: <g fill="none" stroke="#444"><path d="M1 2h10v7H1z" fill="#fff" stroke="#a98" /><path d="M11 5h6v6M15 9l2 3 2-3" /><path d="M8 16c3-4 7-4 10 0-3 3-7 3-10 0z" /><circle cx="13" cy="16" r="1.500" fill="#333" /></g> },
  { name: '旋转中心', on: true, art: <g><path d="M4 4l6 6-5 7M10 10h7" fill="none" stroke="#444" strokeWidth="1.300" /><circle cx="4" cy="4" r="2.800" fill="#5fb070" /><circle cx="5" cy="17" r="2.800" fill="#3f9cc0" /><circle cx="17" cy="10" r="2.800" fill="#e06464" /></g> },
];

function Viewport() {
  return (
    <main className="relative flex-1 overflow-hidden bg-[#e7e9ec]">
      <Model />
      <div className="absolute right-[54px] top-[7px] flex h-[33px] w-[322px] items-center justify-between border border-[#a4a6a8] bg-[#fafbfc] pl-[3px] pr-[3px]">
        {viewTools.map(({ name, art, on }) => (
          <button key={name} aria-label={name} className={`flex h-[23px] w-[23px] items-center justify-center border ${on ? 'border-[#a6abae] bg-[#dfe2e4]' : 'border-transparent'}`}>
            <svg viewBox="0 0 20 20" className="h-[17px] w-[17px]">{art}</svg>
          </button>
        ))}
      </div>
    </main>
  );
}

/* ---------- forum mark and input method bar ---------- */

function ForumMark() {
  return (
    <div className="pointer-events-none absolute bottom-[5px] right-0 flex h-[62px] w-[211px] bg-white/30">
      <svg viewBox="0 0 60 62" className="h-[62px] w-[60px] shrink-0 opacity-60" fill="none">
        <path d="M40 33C30 42 10 26 5 15C2 3 18 3 30 12C40 20 44 28 42 35" stroke="#4c6384" strokeWidth="3" />
        <path d="M16 37C8 42 11 54 20 56C30 57 38 46 36 34" stroke="#aeb4bd" strokeWidth="3" />
        <path d="M42 22C56 15 62 32 52 45C46 53 38 58 32 56C46 52 56 36 42 22z" fill="#cc4d56" stroke="#cc4d56" strokeWidth="2" />
      </svg>
      <div className="flex flex-col pt-1">
        <span className="pl-[10px] text-[29px] font-black leading-8 text-[#3f9a68]/75">野火论坛</span>
        <span className="whitespace-nowrap text-[15px] leading-6 text-[#a9cfc4]/70">www.proewildfire.cn</span>
      </div>
    </div>
  );
}

function InputMethodBar() {
  return (
    <div className="absolute bottom-0 right-0 flex h-[22px] w-[156px] items-center gap-[11px] border border-[#c6ccd4] bg-white/90 pl-[6px] text-[#4a75d8]">
      <button aria-label="输入法">
        <svg viewBox="0 0 16 16" className="h-4 w-4"><path d="M1 1h14v14H1z" fill="#fff" stroke="#4a75d8" /><path d="M1 10c4-2 7 4 14 2v3H1z" fill="#4a75d8" /><path d="M7 10l7-7" stroke="#4a75d8" strokeWidth="1.500" /></svg>
      </button>
      <button className="text-[15px] font-bold leading-4">中</button>
      <button aria-label="半角"><Moon className="h-[14px] w-[14px] fill-[#4a75d8] -rotate-90" /></button>
      <button aria-label="标点">
        <svg viewBox="0 0 14 14" className="h-[14px] w-[14px]"><circle cx="3.500" cy="4" r="2" fill="none" stroke="#4a75d8" strokeWidth="1.500" /><path d="M9 6h4c1 3-1 6-3 7l-1-1 2-3H9z" fill="#4a75d8" /></svg>
      </button>
      <button aria-label="账户">
        <svg viewBox="0 0 14 14" className="h-[14px] w-[14px]" fill="#b3c5f0"><circle cx="7" cy="4" r="3.500" /><path d="M0 14c0-8 14-8 14 0z" /></svg>
      </button>
      <button aria-label="工具箱"><Settings className="h-[15px] w-[15px]" /></button>
    </div>
  );
}

function CreoWindow() {
  return (
    <div className="absolute bottom-0 left-[609px] right-0 top-[109px] flex flex-col overflow-hidden border-l-4 border-t-4 border-[#b9bbbb]">
      <TitleBar />
      <MenuBar />
      <Ribbon />
      <div className="flex min-h-0 flex-1">
        <ModelTree />
        <Viewport />
      </div>
    </div>
  );
}

export default function App() {
  return (
    <div className="relative h-screen overflow-hidden bg-black font-['Noto_Sans','Noto_Sans_CJK_SC',sans-serif]">
      <Desktop />
      <ReferencePanel />
      <CreoWindow />
      <InputMethodBar />
      <ForumMark />
    </div>
  );
}
